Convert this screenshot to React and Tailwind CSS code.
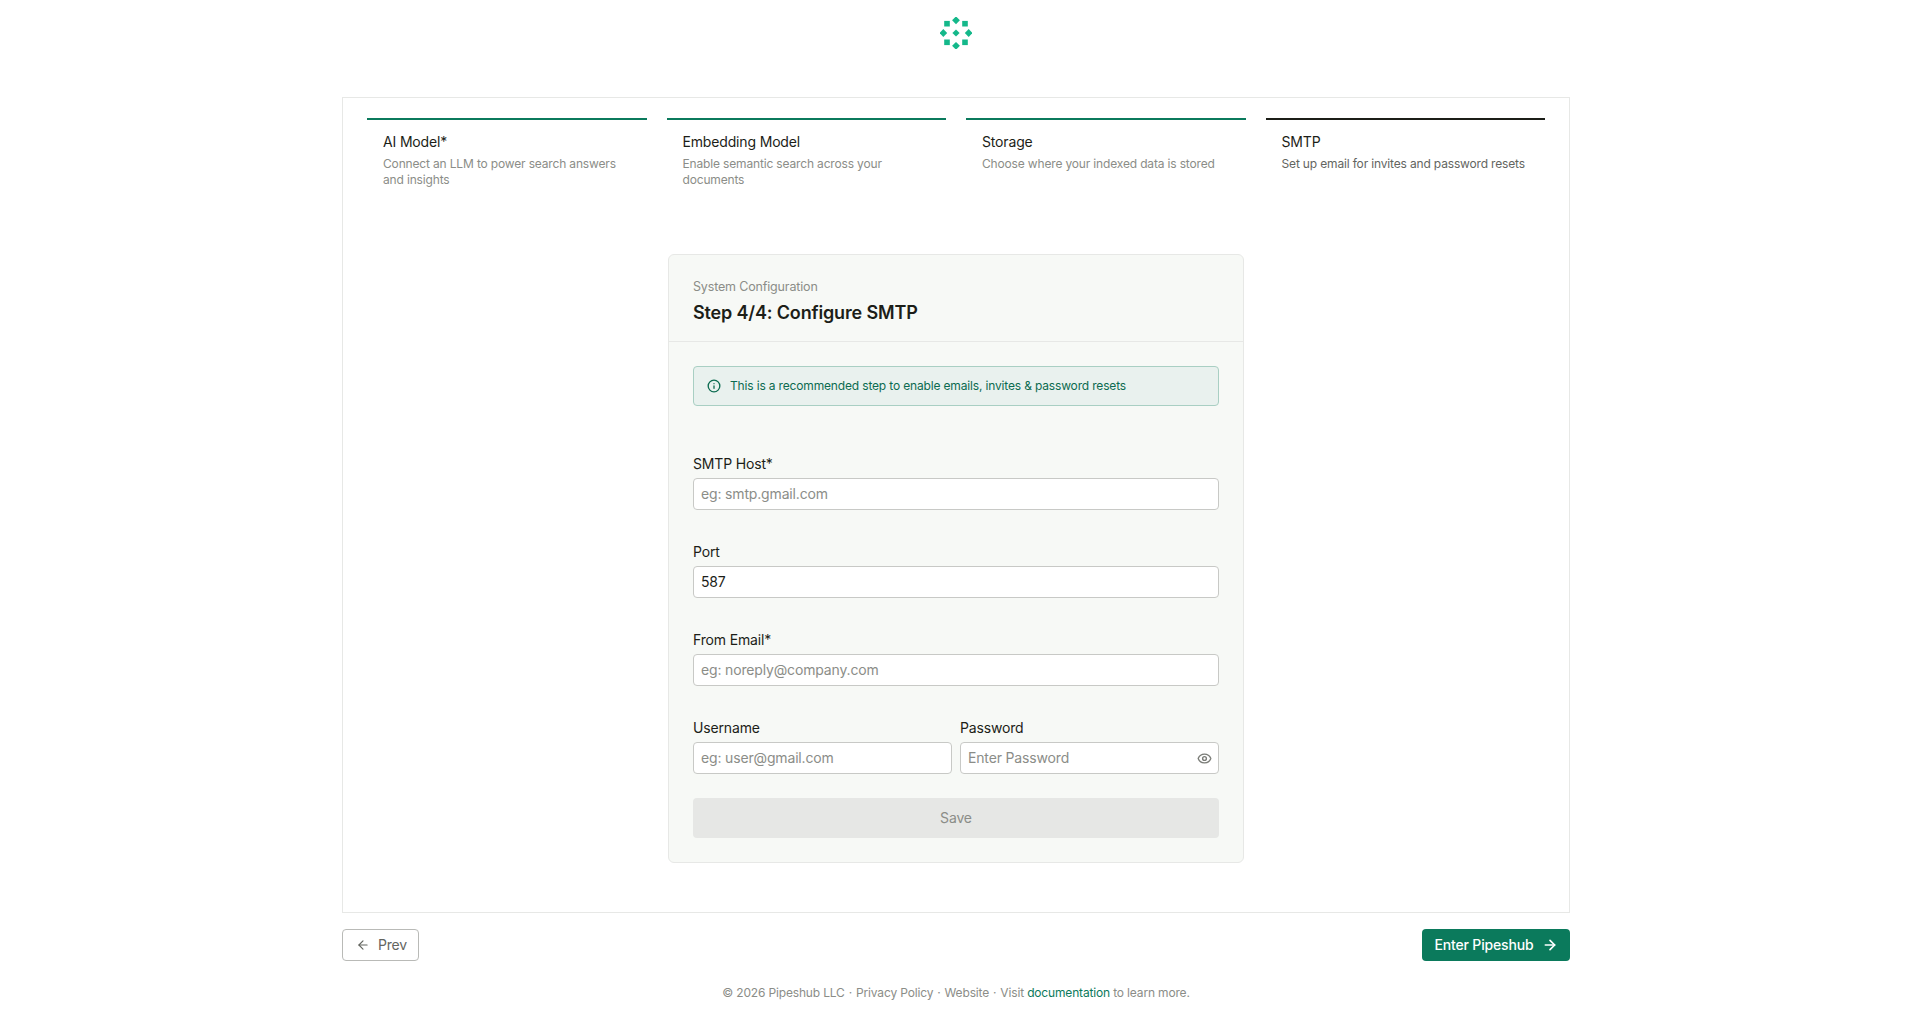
import React from 'react';
import { ArrowLeft, ArrowRight, Eye, Info } from 'lucide-react';

const steps = [
  { title: 'AI Model*', desc: 'Connect an LLM to power search answers and insights', line: 'bg-[#0b7a5c]', tone: 'text-[#8b8d88]' },
  { title: 'Embedding Model', desc: 'Enable semantic search across your documents', line: 'bg-[#0b7a5c]', tone: 'text-[#8b8d88]' },
  { title: 'Storage', desc: 'Choose where your indexed data is stored', line: 'bg-[#0b7a5c]', tone: 'text-[#8b8d88]' },
  { title: 'SMTP', desc: 'Set up email for invites and password resets', line: 'bg-[#1c1e18]', tone: 'text-[#63655f]' },
];

const Logo = () => (
  <svg width="32" height="32" viewBox="-16 -16 32 32" className="text-[#14b88a]" fill="currentColor">
    <path d="M0 -16.6l3.9 3.9-3.9 3.9-3.9-3.9z" />
    <path d="M0 8.9l3.9 3.9-3.9 3.9-3.9-3.9z" />
    <path d="M-12.7 -3.9l3.9 3.9-3.9 3.9-3.9-3.9z" />
    <path d="M12.7 -3.9l3.9 3.9-3.9 3.9-3.9-3.9z" />
    <path d="M0 -3.6l3.6 3.6-3.6 3.6-3.6-3.6z" />
    <rect x="-11.8" y="-12.1" width="5.6" height="5.6" />
    <rect x="6.2" y="-12.1" width="5.6" height="5.6" />
    <rect x="-11.8" y="6.5" width="5.6" height="5.6" />
    <rect x="6.2" y="6.5" width="5.6" height="5.6" />
  </svg>
);

const Field = ({ label, placeholder, value, icon, className = '' }) => (
  <div className={`flex flex-col gap-1 ${className}`}>
    <label className="h-[20px] text-sm leading-5 text-[#1c1e18]">{label}</label>
    <div className="flex h-8 items-center rounded border border-[#c8c9c6] bg-white pl-[7px] pr-1.5">
      <input
        defaultValue={value}
        placeholder={placeholder}
        className="w-full min-w-0 bg-transparent text-sm text-[#1c1e18] outline-none placeholder:text-[#8b8d88]"
      />
      {icon}
    </div>
  </div>
);

const Dot = () => <span className="mx-1">·</span>;

export default function App() {
  return (
    <div className="flex h-[1015px] flex-col items-center overflow-hidden bg-white pr-[3px] font-['Inter',sans-serif] tracking-[-0.01em]">
      {/* Logo */}
      <div className="flex h-[97px] items-start pt-[17px]">
        <Logo />
      </div>

      {/* Wizard frame */}
      <div className="h-[816px] w-[1228px] border border-[#e7e8e6] px-6 pt-[20px]">
        <div className="grid grid-cols-4 gap-5">
          {steps.map((s) => (
            <div key={s.title}>
              <div className={`h-[2px] ${s.line}`} />
              <div className="px-4 pt-3">
                <p className="text-sm leading-5 text-[#1c1e18]">{s.title}</p>
                <p className={`mt-1 text-xs leading-4 ${s.tone}`}>{s.desc}</p>
              </div>
            </div>
          ))}
        </div>

        {/* SMTP card */}
        <div className="mx-auto mt-[66px] w-[576px] rounded-md border border-[#e7e8e6] bg-[#f7f9f6]">
          <div className="border-b border-[#e7e8e6] px-6 pb-4 pt-6">
            <p className="text-[12.5px] leading-4 text-[#8b8d88]">System Configuration</p>
            <h1 className="mt-[6px] text-lg font-semibold leading-6 text-[#1c1e18]">Step 4/4: Configure SMTP</h1>
          </div>

          <div className="p-6">
            <div className="flex h-10 items-center gap-[9px] rounded border border-[#a9cfc3] bg-[#e9f1ee] pl-[13px] pr-3 text-xs text-[#0c6b50]">
              <Info size={14} strokeWidth={2.25} />
              <span>This is a recommended step to enable emails, invites &amp; password resets</span>
            </div>

            <div className="mt-[48px] flex flex-col gap-[32px]">
              <Field label="SMTP Host*" placeholder="eg: smtp.gmail.com" />
              <Field label="Port" value="587" />
              <Field label="From Email*" placeholder="eg: noreply@company.com" />
              <div className="grid grid-cols-2 gap-2">
                <Field label="Username" placeholder="eg: user@gmail.com" />
                <Field
                  label="Password"
                  placeholder="Enter Password"
                  icon={<Eye size={15} strokeWidth={2.25} className="shrink-0 text-[#7a7c77]" />}
                />
              </div>
            </div>

            <button className="mt-6 h-10 w-full rounded bg-[#e6e7e5] text-sm text-[#8b8d88]">Save</button>
          </div>
        </div>
      </div>

      {/* Nav buttons */}
      <div className="mt-[16px] flex w-[1228px] items-center justify-between">
        <button className="flex h-8 w-[77px] items-center justify-center gap-2 rounded border border-[#b9bab7] bg-white pl-0.5 text-sm text-[#63655f]">
          <ArrowLeft size={14} strokeWidth={2} />
          Prev
        </button>
        <button className="flex h-8 w-[148px] items-center justify-center gap-2 rounded bg-[#0b7a5c] text-sm font-medium text-white">
          Enter Pipeshub
          <ArrowRight size={16} strokeWidth={2.5} />
        </button>
      </div>

      {/* Footer */}
      <p className="mt-[24px] text-xs leading-4 text-[#8b8d88]">
        © 2026 Pipeshub LLC<Dot />Privacy Policy<Dot />Website<Dot />Visit{' '}
        <span className="text-[#0b7a5c]">documentation</span> to learn more.
      </p>
    </div>
  );
}
